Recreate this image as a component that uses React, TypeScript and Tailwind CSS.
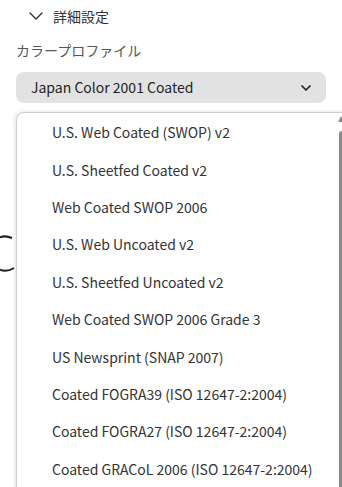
import { ChevronDown } from "lucide-react"

const profiles = [
  "U.S. Web Coated (SWOP) v2",
  "U.S. Sheetfed Coated v2",
  "Web Coated SWOP 2006",
  "U.S. Web Uncoated v2",
  "U.S. Sheetfed Uncoated v2",
  "Web Coated SWOP 2006 Grade 3",
  "US Newsprint (SNAP 2007)",
  "Coated FOGRA39 (ISO 12647-2:2004)",
  "Coated FOGRA27 (ISO 12647-2:2004)",
  "Coated GRACoL 2006 (ISO 12647-2:2004)",
]

export default function App() {
  return (
    <div
      className="relative w-[342px] h-[487px] overflow-hidden bg-white text-[14px] text-[#333]"
      style={{ fontFamily: '"Noto Sans CJK JP", "Noto Sans", sans-serif' }}
    >
      <div className="flex items-center gap-[5px] pl-[24px] h-[32px]">
        <ChevronDown size={24} strokeWidth={1.4} className="text-[#333]" />
        <span className="leading-none">詳細設定</span>
      </div>

      <div className="pl-[16px] h-[36px] flex items-center text-[#555] leading-none">カラープロファイル</div>

      <div className="mx-[16px] mt-[4px] h-[31px] rounded-[8px] bg-[#e2e2e2] flex items-center justify-between pl-[15px] pr-[12px]">
        <span className="text-[#222]">Japan Color 2001 Coated</span>
        <ChevronDown size={16} strokeWidth={2.6} className="text-[#222]" />
      </div>

      {/* partially hidden control behind the menu */}
      <svg className="absolute left-0 top-[232px]" width="40" height="40" viewBox="0 0 40 40">
        <path d="M 12 6 A 17 17 0 1 0 14 36" fill="none" stroke="#222" strokeWidth="2" />
      </svg>

      {/* open dropdown menu */}
      <div className="absolute left-[16px] top-[112px] w-[340px] h-[400px] bg-white border border-[#cfcfcf] rounded-tl-[8px] shadow-[-1px_0_4px_rgba(0,0,0,0.12)]">
        <div className="pt-[1px]">
          {profiles.map((p) => (
            <div key={p} className="h-[37.4px] flex items-center pl-[35px] text-[#333]">
              {p}
            </div>
          ))}
        </div>
        <div className="absolute right-[11px] top-[3px] w-0 h-0 border-l-[3px] border-r-[3px] border-b-[6px] border-l-transparent border-r-transparent border-b-[#8a8a8a]" />
        <div className="absolute right-[10px] top-[18px] bottom-0 w-[6px] rounded-t-[3px] bg-[#8a8a8a]" />
      </div>
    </div>
  )
}
